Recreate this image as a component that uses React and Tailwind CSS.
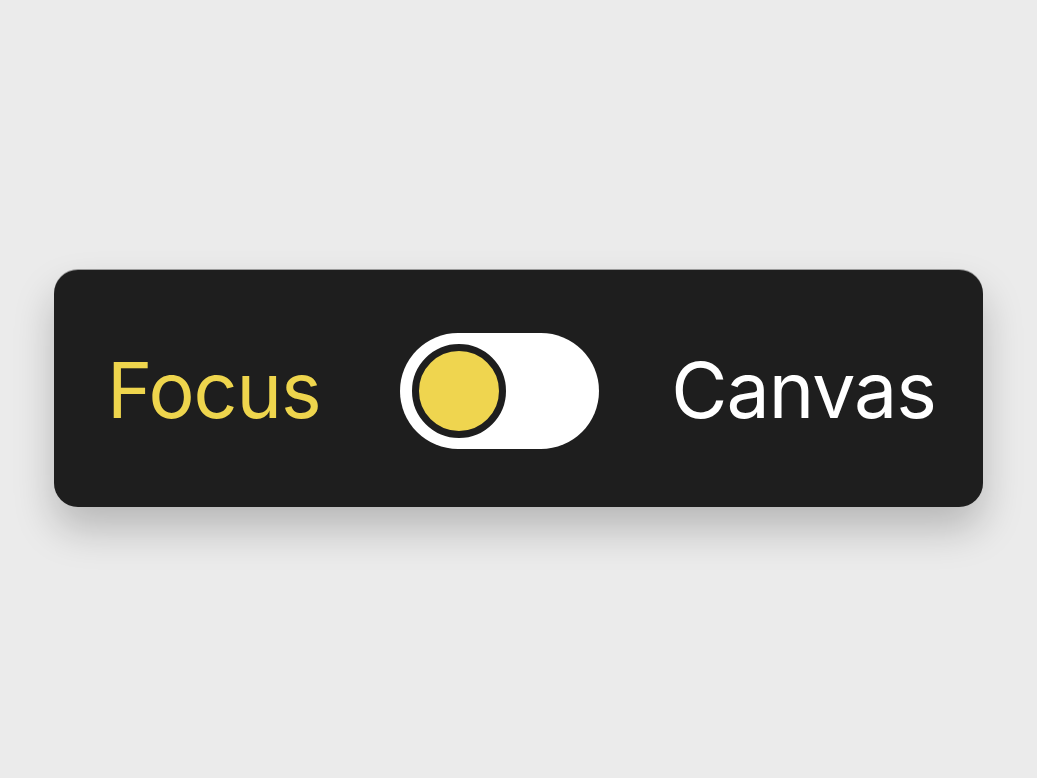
import React, { useState } from 'react';

export default function App() {
    const [canvas, setCanvas] = useState(false);

    return (
        <div className="min-h-screen w-full bg-[#ebebeb] flex items-start justify-center pt-[270px]" style={{ fontFamily: 'Inter, "Noto Sans", sans-serif' }}>
            <div className="w-[929px] h-[237px] rounded-[24px] bg-[#1e1e1e] shadow-[0_-1px_0_#9a9a9a,0_22px_40px_rgba(0,0,0,0.22)] flex items-center justify-between pl-[53px] pr-[47px] pt-[4px]">
                <span className={`text-[77px] leading-none tracking-[-1px] ${canvas ? 'text-white' : 'text-[#eed54d]'}`}>Focus</span>
                <button
                    onClick={() => setCanvas(!canvas)}
                    className={`shrink-0 w-[199px] h-[116px] rounded-full bg-white flex items-center px-[12px] ml-[6px] ${canvas ? 'justify-end' : 'justify-start'}`}
                >
                    <span className="w-[94px] h-[94px] rounded-full bg-[#efd54f] border-[7px] border-[#1e1e1e]"></span>
                </button>
                <span className={`text-[77px] leading-none tracking-[-1px] ${canvas ? 'text-[#eed54d]' : 'text-white'}`}>Canvas</span>
            </div>
        </div>
    );
}
